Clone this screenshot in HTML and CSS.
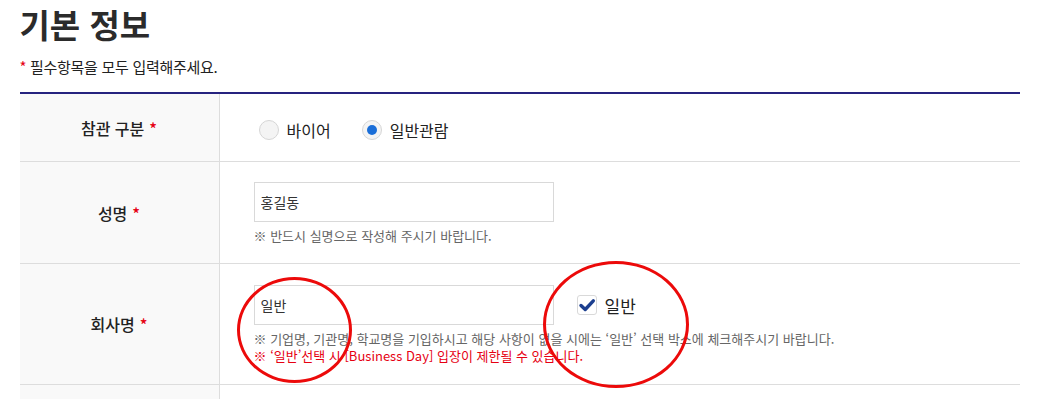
FILE: index.html
```html
<!DOCTYPE html>
<html lang="ko">
<head>
    <meta charset="UTF-8">
    <meta name="viewport" content="width=device-width, initial-scale=1.0">
    <title>기본 정보</title>
    <link rel="stylesheet" href="styles.css">
</head>
<body>
    <div class="wrap">
        <h2 class="title">기본 정보</h2>
        <p class="required-note"><span class="star">*</span> 필수항목을 모두 입력해주세요.</p>

        <!-- 기본 정보 입력 표 -->
        <div class="form-table">
            <div class="form-row">
                <div class="form-label"><span>참관 구분</span><span class="star">*</span></div>
                <div class="form-value radio-group">
                    <label class="radio"><span class="radio-mark"></span>바이어</label>
                    <label class="radio checked"><span class="radio-mark"></span>일반관람</label>
                </div>
            </div>

            <div class="form-row">
                <div class="form-label"><span>성명</span><span class="star">*</span></div>
                <div class="form-value">
                    <div class="input-line">
                        <input type="text" class="input-field" value="홍길동">
                    </div>
                    <p class="help">※ 반드시 실명으로 작성해 주시기 바랍니다.</p>
                </div>
            </div>

            <div class="form-row marked">
                <div class="form-label"><span>회사명</span><span class="star">*</span></div>
                <div class="form-value tall">
                    <div class="input-line">
                        <input type="text" class="input-field" value="일반">
                        <label class="check"><span class="check-mark"><svg viewBox="0 0 20 20" width="20" height="20"><path d="M4 10.5 L8.2 14.5 L16.3 5.8" fill="none" stroke="#1c3f8f" stroke-width="3.4" stroke-linecap="round" stroke-linejoin="round"/></svg></span>일반</label>
                    </div>
                    <p class="help">※ 기업명, 기관명, 학교명을 기입하시고 해당 사항이 없을 시에는 ‘일반’ 선택 박스에 체크해주시기 바랍니다.</p>
                    <p class="help warn">※ ‘일반’선택 시 [Business Day] 입장이 제한될 수 있습니다.</p>
                </div>

                <!-- 표시용 빨간 원 -->
                <span class="ring ring-left"></span>
                <span class="ring ring-right"></span>
            </div>

            <div class="form-row last">
                <div class="form-label"></div>
                <div class="form-value"></div>
            </div>
        </div>
    </div>
</body>
</html>
```

FILE: styles.css
```css
body {
    margin: 0;
    padding: 0;
    font-family: "Noto Sans CJK KR", "Noto Sans", sans-serif;
    color: #222;
    background: #fff;
    overflow: hidden;
}

.wrap {
    width: 1000px;
    margin: 0 auto;
    padding-top: 2px;
}

.title {
    margin: 0;
    font-size: 33px;
    font-weight: 700;
    line-height: 44px;
    color: #2b2b2b;
}

.required-note {
    margin: 11px 0 0;
    font-size: 15px;
    line-height: 20px;
    letter-spacing: -0.3px;
}

.star {
    color: #e60012;
}

/* 표 */
.form-table {
    margin-top: 15px;
    border-top: 2px solid #26237f;
}

.form-row {
    display: grid;
    grid-template-columns: 200px 1fr;
    border-bottom: 1px solid #ddd;
    position: relative;
}

.form-label {
    display: flex;
    align-items: center;
    justify-content: center;
    gap: 5px;
    background: #f9f9f9;
    border-right: 1px solid #ddd;
    font-size: 16px;
    font-weight: 500;
}

.form-value {
    padding: 20px 34px 19px;
}

.form-value.tall {
    padding: 21px 34px 20px;
}

.radio-group {
    display: flex;
    align-items: center;
    gap: 31px;
    padding: 21px 39px 20px;
    height: 26px;
}

.radio {
    display: flex;
    align-items: center;
    gap: 8px;
    font-size: 16px;
    margin-top: 3px;
}

.radio-mark {
    width: 18px;
    height: 18px;
    border-radius: 50%;
    border: 1px solid #d6d6d6;
    background: #f4f4f4;
    position: relative;
}

.radio.checked .radio-mark::after {
    content: "";
    position: absolute;
    left: 4px;
    top: 4px;
    width: 10px;
    height: 10px;
    border-radius: 50%;
    background: #1a6ed8;
}

.input-line {
    display: flex;
    align-items: center;
    gap: 23px;
}

.input-field {
    width: 300px;
    height: 40px;
    box-sizing: border-box;
    border: 1px solid #d9d9d9;
    padding: 0 6px;
    font-family: inherit;
    font-size: 14px;
    color: #333;
    background: #fff;
    outline: none;
}

.check {
    display: flex;
    align-items: center;
    gap: 8px;
    font-size: 17px;
}

.check-mark {
    width: 18px;
    height: 18px;
    border: 1px solid #d9d9d9;
    border-radius: 3px;
    background: #fff;
    display: flex;
}

.check-mark svg {
    margin: -1px;
}

.help {
    margin: 5px 0 0;
    font-size: 13px;
    line-height: 17px;
    color: #666;
}

.help + .help {
    margin-top: 0;
}

.help.warn {
    color: #e60012;
}

.form-row.last .form-label,
.form-row.last .form-value {
    height: 16px;
    padding: 0;
}

/* 빨간 원 표시 */
.ring {
    position: absolute;
    border: 3px solid #ec0a0a;
    border-radius: 50%;
    box-sizing: border-box;
    pointer-events: none;
}

.ring-left {
    left: 217px;
    top: 13px;
    width: 115px;
    height: 106px;
}

.ring-right {
    left: 523px;
    top: -3px;
    width: 146px;
    height: 127px;
}
```
